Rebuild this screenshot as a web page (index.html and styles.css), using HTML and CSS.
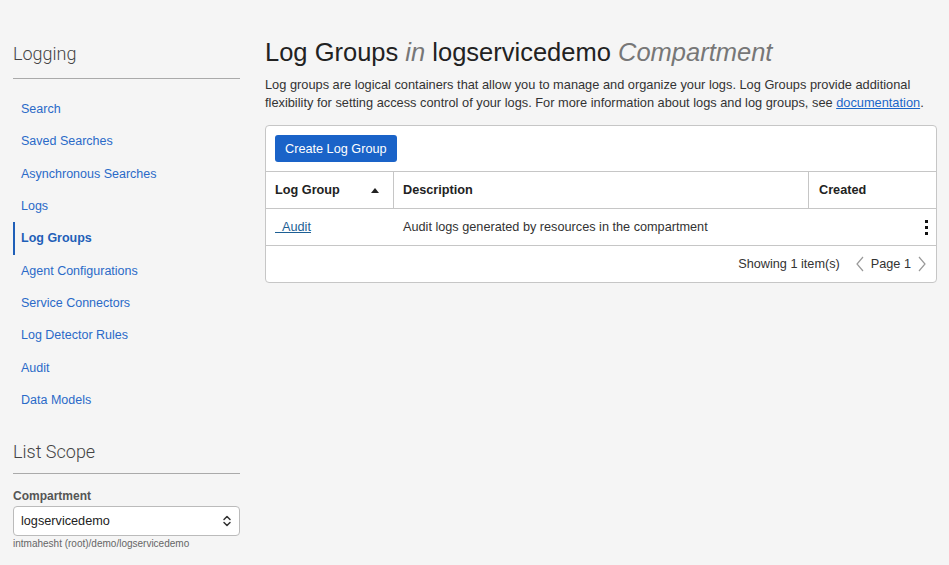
FILE: index.html
```html
<!DOCTYPE html>
<html lang="en">
<head>
<meta charset="utf-8">
<title>Log Groups</title>
<link rel="stylesheet" href="styles.css">
</head>
<body>
<div class="page">
  <aside class="sidebar">
    <h2 class="side-heading">Logging</h2>
    <div class="side-rule"></div>
    <nav class="side-nav">
      <a class="nav-item">Search</a>
      <a class="nav-item">Saved Searches</a>
      <a class="nav-item">Asynchronous Searches</a>
      <a class="nav-item">Logs</a>
      <a class="nav-item active">Log Groups</a>
      <a class="nav-item">Agent Configurations</a>
      <a class="nav-item">Service Connectors</a>
      <a class="nav-item">Log Detector Rules</a>
      <a class="nav-item">Audit</a>
      <a class="nav-item">Data Models</a>
    </nav>
    <h2 class="side-heading scope">List Scope</h2>
    <div class="side-rule scope-rule"></div>
    <div class="field-label">Compartment</div>
    <div class="select">
      <span>logservicedemo</span>
      <svg class="updown" width="10" height="14" viewBox="0 0 10 14"><path d="M2 5.5 L5 2.5 L8 5.5 M2 8.5 L5 11.5 L8 8.5" fill="none" stroke="#333" stroke-width="1.5" stroke-linecap="round" stroke-linejoin="round"/></svg>
    </div>
    <div class="field-help">intmahesht (root)/demo/logservicedemo</div>
  </aside>
  <main class="main">
    <h1 class="title">Log Groups <em>in</em> logservicedemo <em>Compartment</em></h1>
    <p class="intro">Log groups are logical containers that allow you to manage and organize your logs. Log Groups provide additional flexibility for setting access control of your logs. For more information about logs and log groups, see <span class="doc-link">documentation</span>.</p>
    <section class="card">
      <div class="toolbar"><button class="btn-primary">Create Log Group</button></div>
      <div class="trow thead">
        <div class="cell c1">Log Group <span class="sort"></span></div>
        <div class="cell c2">Description</div>
        <div class="cell c3">Created</div>
      </div>
      <div class="trow tbody">
        <div class="cell c1"><a class="row-link">&nbsp;&nbsp;Audit</a></div>
        <div class="cell c2">Audit logs generated by resources in the compartment</div>
        <div class="cell c3 actions"><span class="kebab"><i></i><i></i><i></i></span></div>
      </div>
      <div class="tfoot">
        <span class="count">Showing 1 item(s)</span>
        <span class="pager">
          <svg width="10" height="16" viewBox="0 0 10 16"><path d="M8 1 L2 8 L8 15" fill="none" stroke="#999" stroke-width="1.2"/></svg>
          <span class="page-num">Page 1</span>
          <svg width="10" height="16" viewBox="0 0 10 16"><path d="M2 1 L8 8 L2 15" fill="none" stroke="#999" stroke-width="1.2"/></svg>
        </span>
      </div>
    </section>
  </main>
</div>
</body>
</html>
```
FILE: styles.css
```css
* { box-sizing: border-box; }
html, body { margin: 0; padding: 0; }
body {
  background: #f5f5f5;
  font-family: "Liberation Sans", Arial, sans-serif;
  color: #333;
  font-size: 12.7px;
}
.page {
  display: flex;
  gap: 25px;
  padding: 0 12px 0 13px;
}
.sidebar {
  width: 227px;
  flex: none;
  padding-top: 42px;
}
.side-heading {
  margin: 0;
  font-family: Roboto, "Liberation Sans", sans-serif;
  font-size: 18px;
  line-height: 24px;
  font-weight: 300;
  color: #444;
}
.side-heading.scope { margin-top: 24px; }
.side-rule {
  height: 1px;
  background: #aaa;
  margin-top: 12px;
}
.side-rule.scope-rule { margin-top: 9px; }
.side-nav {
  display: flex;
  flex-direction: column;
  padding-top: 14px;
}
.nav-item {
  display: flex;
  align-items: center;
  height: 32.33px;
  padding-left: 6px;
  color: #2a6ac8;
  font-size: 12.5px;
  border-left: 2px solid transparent;
}
.nav-item.active {
  font-weight: bold;
  color: #1f5fb8;
  border-left-color: #1f5fb8;
}
.field-label {
  margin-top: 14px;
  font-size: 12px;
  line-height: 16px;
  font-weight: bold;
  color: #555;
}
.select {
  margin-top: 2px;
  height: 30px;
  background: #fff;
  border: 1px solid #bbb;
  border-radius: 4px;
  display: flex;
  align-items: center;
  justify-content: space-between;
  padding: 0 7px;
  font-size: 12.7px;
  color: #222;
}
.field-help {
  margin-top: 1px;
  font-size: 10px;
  line-height: 14px;
  color: #666;
}
.main {
  flex: 1;
  padding-top: 36px;
}
.title {
  margin: 0;
  font-size: 25.5px;
  line-height: 32px;
  font-weight: normal;
  color: #222;
}
.title em { color: #777; }
.intro {
  margin: 8px 0 0;
  line-height: 18px;
  font-size: 12.8px;
  color: #333;
}
.doc-link { color: #1a66c9; text-decoration: underline; }
.card {
  margin-top: 13px;
  background: #fff;
  border: 1px solid #c6c6c6;
  border-radius: 4px;
}
.toolbar {
  padding: 9px 9px 9px;
}
.btn-primary {
  display: block;
  height: 27px;
  padding: 0 10px;
  background: #1a63c8;
  color: #fff;
  border: none;
  border-radius: 3px;
  font-family: inherit;
  font-size: 12.7px;
}
.trow {
  display: flex;
  border-top: 1px solid #c6c6c6;
  height: 37px;
}
.cell {
  display: flex;
  align-items: center;
  padding: 0 9px;
}
.c1 { width: 128px; }
.c2 { flex: 1; }
.c3 { width: 127px; }
.thead .cell { font-weight: bold; color: #222; }
.thead .c3 { padding-left: 10px; }
.thead .c1, .thead .c2 { border-right: 1px solid #c6c6c6; }
.thead .c1 { justify-content: space-between; padding-right: 14px; }
.sort {
  width: 0; height: 0;
  border-left: 4px solid transparent;
  border-right: 4px solid transparent;
  border-bottom: 5px solid #222;
}
.tbody .cell { color: #333; }
.tbody .c1 { padding-right: 0; }
.row-link { color: #1d5f94; text-decoration: underline; }
.actions { justify-content: flex-end; padding-right: 8px; }
.kebab { display: flex; flex-direction: column; gap: 3px; }
.kebab i { display: block; width: 3px; height: 3px; background: #111; }
.tfoot {
  border-top: 1px solid #c6c6c6;
  height: 37px;
  display: flex;
  align-items: center;
  justify-content: flex-end;
  padding-right: 9px;
  color: #333;
}
.pager {
  display: flex;
  align-items: center;
  gap: 6px;
  margin-left: 15px;
}
```
